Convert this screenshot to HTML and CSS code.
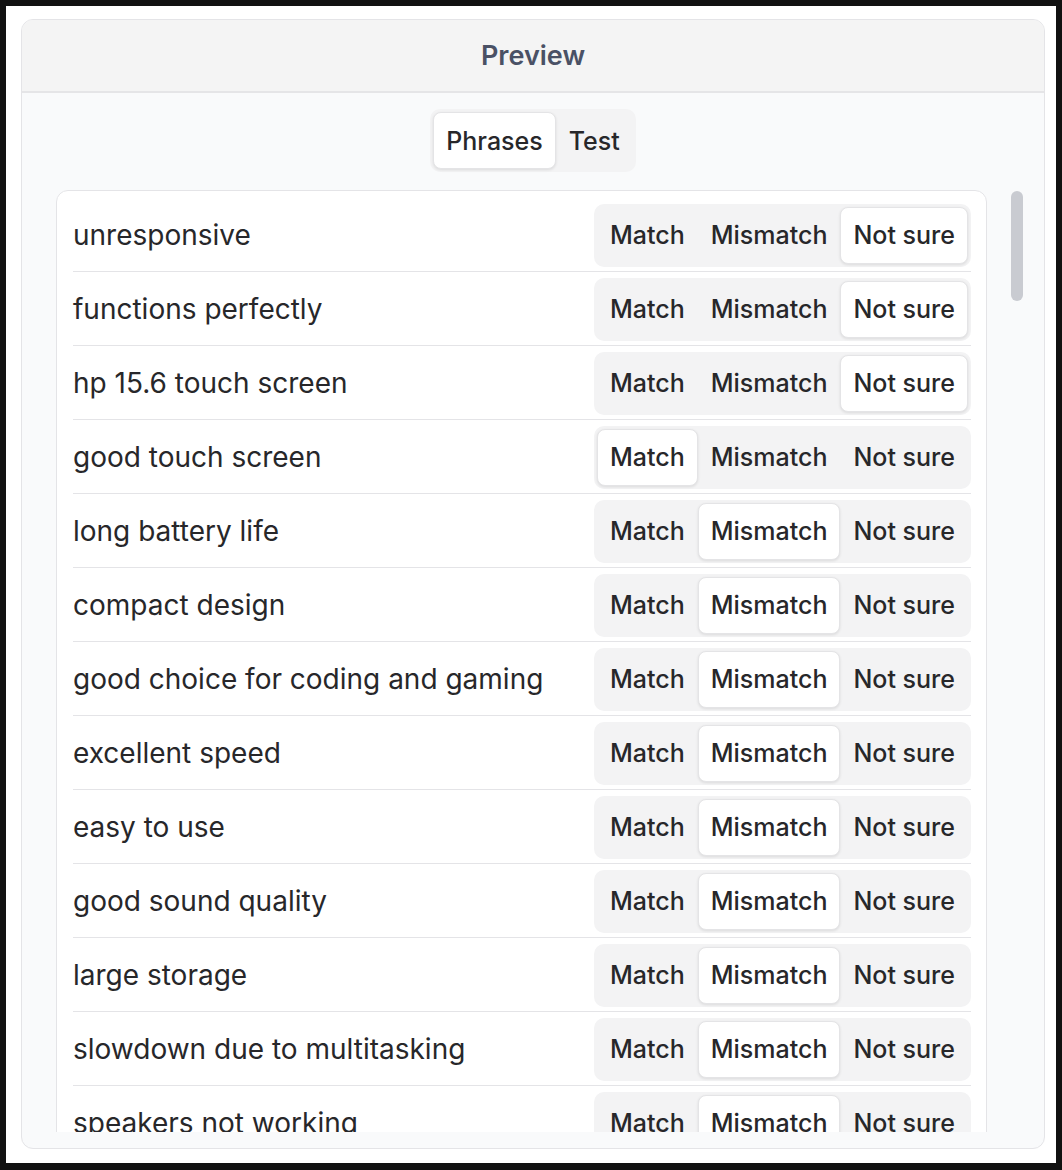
FILE: index.html
```html
<!DOCTYPE html>
<html lang="en">
<head>
<meta charset="utf-8">
<title>Preview</title>
<link rel="stylesheet" href="styles.css">
</head>
<body>
<div class="page">
  <section class="panel">
    <header class="panel-head"><h1 class="title">Preview</h1></header>
    <div class="panel-body">
      <div class="tabs">
        <button class="tab on">Phrases</button>
        <button class="tab">Test</button>
      </div>
      <div class="scroll">
        <div class="card">
          <div class="row"><span class="phrase">unresponsive</span><div class="seg"><button class="opt">Match</button><button class="opt">Mismatch</button><button class="opt on">Not sure</button></div></div>
          <div class="row"><span class="phrase">functions perfectly</span><div class="seg"><button class="opt">Match</button><button class="opt">Mismatch</button><button class="opt on">Not sure</button></div></div>
          <div class="row"><span class="phrase">hp 15.6 touch screen</span><div class="seg"><button class="opt">Match</button><button class="opt">Mismatch</button><button class="opt on">Not sure</button></div></div>
          <div class="row"><span class="phrase">good touch screen</span><div class="seg"><button class="opt on">Match</button><button class="opt">Mismatch</button><button class="opt">Not sure</button></div></div>
          <div class="row"><span class="phrase">long battery life</span><div class="seg"><button class="opt">Match</button><button class="opt on">Mismatch</button><button class="opt">Not sure</button></div></div>
          <div class="row"><span class="phrase">compact design</span><div class="seg"><button class="opt">Match</button><button class="opt on">Mismatch</button><button class="opt">Not sure</button></div></div>
          <div class="row"><span class="phrase">good choice for coding and gaming</span><div class="seg"><button class="opt">Match</button><button class="opt on">Mismatch</button><button class="opt">Not sure</button></div></div>
          <div class="row"><span class="phrase">excellent speed</span><div class="seg"><button class="opt">Match</button><button class="opt on">Mismatch</button><button class="opt">Not sure</button></div></div>
          <div class="row"><span class="phrase">easy to use</span><div class="seg"><button class="opt">Match</button><button class="opt on">Mismatch</button><button class="opt">Not sure</button></div></div>
          <div class="row"><span class="phrase">good sound quality</span><div class="seg"><button class="opt">Match</button><button class="opt on">Mismatch</button><button class="opt">Not sure</button></div></div>
          <div class="row"><span class="phrase">large storage</span><div class="seg"><button class="opt">Match</button><button class="opt on">Mismatch</button><button class="opt">Not sure</button></div></div>
          <div class="row"><span class="phrase">slowdown due to multitasking</span><div class="seg"><button class="opt">Match</button><button class="opt on">Mismatch</button><button class="opt">Not sure</button></div></div>
          <div class="row"><span class="phrase">speakers not working</span><div class="seg"><button class="opt">Match</button><button class="opt on">Mismatch</button><button class="opt">Not sure</button></div></div>
        </div>
        <div class="thumb"></div>
      </div>
    </div>
  </section>
</div>
</body>
</html>
```
FILE: styles.css
```css
* { box-sizing: border-box; }
html, body { margin: 0; padding: 0; }
body {
  background: #111111;
  font-family: Inter, "Noto Sans", "Liberation Sans", sans-serif;
  color: #27272a;
}
.page {
  margin: 6px;
  height: 1157px;
  background: #ffffff;
  padding: 13px 11px 14px 15px;
}
.panel {
  height: 1130px;
  border: 1px solid #e4e4e7;
  border-radius: 12px;
  background: #f9fafb;
  display: flex;
  flex-direction: column;
  overflow: hidden;
}
.panel-head {
  height: 73px;
  flex: none;
  background: #f4f4f4;
  border-bottom: 2px solid #e5e5e7;
  display: flex;
  align-items: center;
  justify-content: center;
}
.title {
  margin: 0;
  font-size: 27px;
  font-weight: 600;
  color: #4a5165;
}
.panel-body {
  flex: 1;
  min-height: 0;
  display: flex;
  flex-direction: column;
  align-items: center;
  padding: 16px 0 16px;
  gap: 18px;
}
.tabs, .seg {
  display: inline-flex;
  padding: 3px;
  background: #f3f3f4;
  border-radius: 10px;
  flex: none;
}
.tab, .opt {
  font-family: inherit;
  font-size: 25px;
  font-weight: 500;
  color: #27272a;
  background: transparent;
  border: 1px solid transparent;
  border-radius: 8px;
  height: 57px;
  padding: 0 12px;
  margin: 0;
  cursor: pointer;
}
.tab.on, .opt.on {
  background: #ffffff;
  border-color: #e4e4e6;
  box-shadow: 0 1px 3px rgba(0, 0, 0, 0.1);
}
.scroll {
  position: relative;
  align-self: stretch;
  flex: 1;
  min-height: 0;
  margin: 0 19px 0 34px;
  overflow: hidden;
}
.thumb {
  position: absolute;
  top: 1px;
  right: 2px;
  width: 12px;
  height: 110px;
  border-radius: 6px;
  background: #c9cbd1;
}
.card {
  margin-right: 38px;
  background: #ffffff;
  border: 1px solid #e4e4e7;
  border-radius: 12px;
  padding: 7px 15px 0 16px;
}
.row {
  display: flex;
  align-items: center;
  justify-content: space-between;
  padding: 5px 0 4px;
  min-height: 74px;
  border-bottom: 1px solid #e4e4e7;
}
.phrase {
  font-size: 28px;
  color: #27272a;
}
```
